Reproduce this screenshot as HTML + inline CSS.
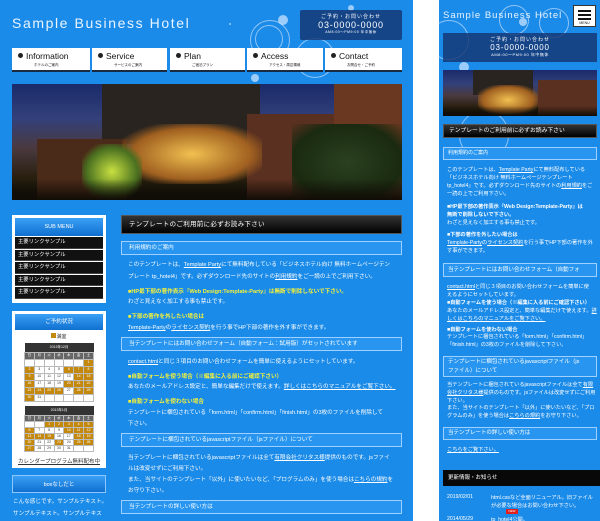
<!DOCTYPE html>
<html><head><meta charset="utf-8">
<style>
*{margin:0;padding:0;box-sizing:border-box}
body{width:600px;height:521px;overflow:hidden;background:#fff;font-family:"Liberation Sans","Noto Sans CJK JP",sans-serif;position:relative;color:#fff}
.a{position:absolute}
#d{left:0;top:0;width:413px;height:521px;background:#1b8be9;overflow:hidden}
#m{left:439px;top:0;width:161px;height:521px;background:#1b8be9;overflow:hidden}
.circ{position:absolute;border-radius:50%;background:rgba(200,225,255,.75)}
.ring{position:absolute;border-radius:50%;border:1px solid rgba(220,235,255,.6)}
.nav{position:absolute;top:48px;height:24px;background:#fff;border-bottom:2px solid #1a2a40;color:#111}
.nav b{position:absolute;left:6px;top:3px;font-size:8.5px;font-weight:normal}
.nav b:before{content:"";display:inline-block;width:5px;height:5px;border-radius:50%;background:#222;margin-right:3px;vertical-align:1px}
.nav i{position:absolute;left:22px;top:15px;font-size:3.5px;font-style:normal}
.photo{background:linear-gradient(180deg,#1a2a6a 0%,#33407a 30%,#4a3a40 55%,#2a2010 80%,#101008 100%)}
.t{position:absolute;font-size:5.6px;white-space:nowrap;color:#fff}
.y{color:#f4f23a;font-weight:bold}
u{text-decoration:underline}
.box{position:absolute;border:1px solid #9fd0ff;background:#2896f0;font-size:5.6px;padding-left:7px;line-height:12px}
.hd{position:absolute;background:linear-gradient(#333,#000);border:1px solid #555;color:#fff}
.side{position:absolute;background:#fff}
.sh{position:absolute;background:linear-gradient(#3aa0f5,#0f6fd0);color:#fff;font-size:5.5px;text-align:center}
.li{position:absolute;left:3px;width:88px;height:11.5px;background:#111;border-bottom:1px solid #444;color:#fff;font-size:5.3px;line-height:11px;padding-left:3px}
table{border-collapse:collapse;position:absolute;table-layout:fixed}
td{height:7px;border:1px solid #bbb;font-size:3.5px;text-align:center;color:#333;background:#fff;padding:0;line-height:5px}
#c2 td{height:6px}
td.o{background:#c4880c;color:#fff}
td.w{background:#666;color:#fff}
th{background:#333;color:#fff;font-size:3.5px;height:9px;font-weight:normal;line-height:5px}
.mt{position:absolute;font-size:5.2px;white-space:nowrap;color:#fff;left:8px}
</style></head><body>

<div id="d" class="a">
  <div class="circ" style="left:278px;top:15px;width:10px;height:10px"></div>
  <div class="circ" style="left:348px;top:5px;width:6px;height:6px"></div>
  <div class="ring" style="left:250px;top:20px;width:40px;height:40px"></div>
  <div class="ring" style="left:255px;top:25px;width:28px;height:28px"></div>
  <div class="ring" style="left:295px;top:38px;width:40px;height:40px"></div>
  <div class="circ" style="left:251px;top:74px;width:8px;height:8px"></div>
  <div class="circ" style="left:229px;top:23px;width:2px;height:2px"></div>
  <div class="a" style="left:12px;top:15px;font-size:14px;letter-spacing:1.6px;font-weight:300;color:#e8f4ff">Sample Business Hotel</div>
  <div class="a" style="left:300px;top:10px;width:102px;height:30px;background:rgba(20,50,110,.8);border-radius:2px;text-align:center">
    <div style="font-size:5px;margin-top:3px;letter-spacing:1px">ご予約・お問い合わせ</div>
    <div style="font-size:9px;letter-spacing:.8px;line-height:10px">03-0000-0000</div>
    <div style="font-size:3.5px;letter-spacing:.5px">AM8:00〜PM9:00 年中無休</div>
  </div>
  <div class="nav" style="left:12px;width:78px"><b>Information</b><i>ホテルのご案内</i></div>
  <div class="nav" style="left:92px;width:75px"><b>Service</b><i>サービスのご案内</i></div>
  <div class="nav" style="left:170px;width:75px"><b>Plan</b><i>ご宿泊プラン</i></div>
  <div class="nav" style="left:247px;width:76px"><b>Access</b><i>アクセス・周辺環境</i></div>
  <div class="nav" style="left:325px;width:77px"><b>Contact</b><i>お問合せ・ご予約</i></div>

  <div class="a photo" style="left:12px;top:84px;width:390px;height:116px;overflow:hidden">
    <div class="a" style="left:90px;top:0;width:158px;height:60px;background:#2a2420"></div>
    <div class="a" style="left:235px;top:30px;width:155px;height:86px;background:#5a3020"></div>
    <div class="a" style="left:322px;top:0;width:68px;height:60px;background:#6a3820"></div>
    <div class="a" style="left:25px;top:55px;width:90px;height:60px;background:#4a2a18"></div>
    <div class="a" style="left:110px;top:40px;width:140px;height:60px;background:radial-gradient(ellipse,#f0c050,#a06020 60%,transparent 80%)"></div>
    <div class="a" style="left:70px;top:60px;width:60px;height:55px;background:radial-gradient(ellipse,#c8e040,#4a7020 60%,transparent 80%)"></div>
    <div class="a" style="left:280px;top:40px;width:110px;height:76px;background:radial-gradient(ellipse,#2a4020,#1a2a10 70%,transparent)"></div>
    <div class="a" style="left:0;top:95px;width:390px;height:21px;background:linear-gradient(transparent,#100c06)"></div>
  </div>

  <div class="side" style="left:12px;top:215px;width:94px;height:88px">
    <div class="sh" style="left:3px;top:3px;width:88px;height:18px;line-height:18px">SUB MENU</div>
    <div class="li" style="top:22px">主要リンクサンプル</div>
    <div class="li" style="top:34.5px">主要リンクサンプル</div>
    <div class="li" style="top:47px">主要リンクサンプル</div>
    <div class="li" style="top:59.5px">主要リンクサンプル</div>
    <div class="li" style="top:72px">主要リンクサンプル</div>
  </div>
  <div class="side" style="left:12px;top:311px;width:94px;height:157px;color:#333">
    <div class="sh" style="left:3px;top:3px;width:88px;height:16px;line-height:16px">ご予約状況</div>
    <div class="a" style="left:0;width:94px;top:22px;text-align:center;font-size:5px"><span style="display:inline-block;width:5px;height:5px;background:#c4880c"></span>満室</div>
    <table style="left:12px;top:32px;width:70px">
      <tr><th colspan="7">2013年12月</th></tr>
      <tr><td class="w">日</td><td class="w">月</td><td class="w">火</td><td class="w">水</td><td class="w">木</td><td class="w">金</td><td class="w">土</td></tr>
      <tr><td></td><td></td><td></td><td></td><td></td><td></td><td class="o">1</td></tr>
      <tr><td class="o">2</td><td>3</td><td>4</td><td>5</td><td class="o">6</td><td class="o">7</td><td class="o">8</td></tr>
      <tr><td class="o">9</td><td>10</td><td>11</td><td>12</td><td>13</td><td class="o">14</td><td class="o">15</td></tr>
      <tr><td class="o">16</td><td>17</td><td>18</td><td>19</td><td class="o">20</td><td class="o">21</td><td class="o">22</td></tr>
      <tr><td class="o">23</td><td class="o">24</td><td class="o">25</td><td class="o">26</td><td>27</td><td class="o">28</td><td class="o">29</td></tr>
      <tr><td class="o">30</td><td>31</td><td></td><td></td><td></td><td></td><td></td></tr>
    </table>
    <table id="c2" style="left:12px;top:95px;width:70px">
      <tr><th colspan="7">2013年1月</th></tr>
      <tr><td class="w">日</td><td class="w">月</td><td class="w">火</td><td class="w">水</td><td class="w">木</td><td class="w">金</td><td class="w">土</td></tr>
      <tr><td></td><td></td><td class="o">1</td><td class="o">2</td><td class="o">3</td><td class="o">4</td><td class="o">5</td></tr>
      <tr><td class="o">6</td><td>7</td><td>8</td><td>9</td><td class="o">10</td><td class="o">11</td><td class="o">12</td></tr>
      <tr><td class="o">13</td><td class="o">14</td><td class="o">15</td><td>16</td><td>17</td><td class="o">18</td><td class="o">19</td></tr>
      <tr><td class="o">20</td><td>21</td><td>22</td><td class="o">23</td><td>24</td><td class="o">25</td><td class="o">26</td></tr>
      <tr><td class="o">27</td><td>28</td><td>29</td><td>30</td><td>31</td><td></td><td></td></tr>
    </table>
    <div class="a" style="left:0;width:94px;top:146px;text-align:center;font-size:5.5px;text-decoration:underline">カレンダープログラム無料配布中</div>
  </div>
  <div class="sh" style="left:12px;top:475px;width:94px;height:18px;line-height:18px;border:1px solid #8cc8ff">boxなしだと</div>
  <div class="t" style="left:13px;top:497px">こんな感じです。サンプルテキスト。</div>
  <div class="t" style="left:13px;top:509px">サンプルテキスト。サンプルテキス</div>
  <div class="t" style="left:13px;top:519px">ト。</div>

  <div class="hd" style="left:121px;top:215px;width:281px;height:19px;font-size:6.5px;line-height:18px;padding-left:7px;letter-spacing:.3px">テンプレートのご利用前に必ずお読み下さい</div>
  <div class="box" style="left:121px;top:241px;width:281px;height:14px">利用規約のご案内</div>
  <div class="t" style="left:128px;top:260px">このテンプレートは、<u>Template Party</u>にて無料配布している「ビジネスホテル向け 無料ホームページテン</div>
  <div class="t" style="left:128px;top:272px">プレート tp_hotel4」です。必ずダウンロード先のサイトの<u>利用規約</u>をご一読の上でご利用下さい。</div>
  <div class="t y" style="left:128px;top:287px">■HP最下部の著作表示『Web Design:Template-Party』は無断で削除しないで下さい。</div>
  <div class="t" style="left:128px;top:297px">わざと見えなく加工する事も禁止です。</div>
  <div class="t y" style="left:128px;top:312px">■下部の著作を外したい場合は</div>
  <div class="t" style="left:128px;top:323px"><u>Template-Party</u>の<u>ライセンス契約</u>を行う事でHP下部の著作を外す事ができます。</div>
  <div class="box" style="left:121px;top:337px;width:281px;height:14px">当テンプレートにはお問い合わせフォーム（自動フォーム：試用版）がセットされています</div>
  <div class="t" style="left:128px;top:357px"><u>contact.html</u>と同じ３項目のお問い合わせフォームを簡単に使えるようにセットしています。</div>
  <div class="t y" style="left:128px;top:372px">■自動フォームを使う場合（※編集に入る前にご確認下さい）</div>
  <div class="t" style="left:128px;top:382px">あなたのメールアドレス設定と、簡単な編集だけで使えます。<u>詳しくはこちらのマニュアルをご覧下さい。</u></div>
  <div class="t y" style="left:128px;top:397px">■自動フォームを使わない場合</div>
  <div class="t" style="left:128px;top:408px">テンプレートに梱包されている「form.html」「confirm.html」「finish.html」の3枚のファイルを削除して</div>
  <div class="t" style="left:128px;top:419px">下さい。</div>
  <div class="box" style="left:121px;top:433px;width:281px;height:14px">テンプレートに梱包されているjavascriptファイル（jsファイル）について</div>
  <div class="t" style="left:128px;top:453px">当テンプレートに梱包されているjavascriptファイルは全て<u>有限会社クリタス様</u>提供のものです。jsファイ</div>
  <div class="t" style="left:128px;top:464px">ルは改変せずにご利用下さい。</div>
  <div class="t" style="left:128px;top:475px">また、当サイトのテンプレート「以外」に使いたいなど、「プログラムのみ」を使う場合は<u>こちらの規約</u>を</div>
  <div class="t" style="left:128px;top:486px">お守り下さい。</div>
  <div class="box" style="left:121px;top:500px;width:281px;height:14px">当テンプレートの詳しい使い方は</div>
</div>

<div id="m" class="a">
  <div class="ring" style="left:-10px;top:20px;width:40px;height:40px"></div>
  <div class="ring" style="left:60px;top:5px;width:30px;height:30px"></div>
  <div class="ring" style="left:100px;top:8px;width:30px;height:30px"></div>
  <div class="circ" style="left:20px;top:62px;width:10px;height:10px"></div>
  <div class="circ" style="left:80px;top:18px;width:8px;height:8px"></div>
  <div class="ring" style="left:20px;top:110px;width:50px;height:50px"></div>
  <div class="a" style="left:4px;top:10px;font-size:9.5px;letter-spacing:1px;color:#e8f4ff">Sample Business Hotel</div>
  <div class="a" style="left:134px;top:5px;width:23px;height:22px;background:#fff;border:1px solid #333">
    <div class="a" style="left:4px;top:4px;width:13px;height:2px;background:#111"></div>
    <div class="a" style="left:4px;top:8px;width:13px;height:2px;background:#111"></div>
    <div class="a" style="left:4px;top:12px;width:13px;height:2px;background:#111"></div>
    <div class="a" style="left:0;top:15px;width:21px;text-align:center;font-size:3.5px;color:#111">MENU</div>
  </div>
  <div class="a" style="left:4px;top:33px;width:154px;height:29px;background:rgba(20,50,110,.8);text-align:center">
    <div style="font-size:5px;margin-top:3px;letter-spacing:1px">ご予約・お問い合わせ</div>
    <div style="font-size:8px;letter-spacing:.8px;line-height:9px">03-0000-0000</div>
    <div style="font-size:4px;letter-spacing:.5px">AM8:00〜PM9:00 年中無休</div>
  </div>
  <div class="a photo" style="left:4px;top:70px;width:154px;height:46px;overflow:hidden">
    <div class="a" style="left:30px;top:0;width:60px;height:25px;background:#2a2420"></div>
    <div class="a" style="left:95px;top:10px;width:59px;height:36px;background:#5a3020"></div>
    <div class="a" style="left:35px;top:15px;width:60px;height:30px;background:radial-gradient(ellipse,#f0c050,#a06020 60%,transparent 80%)"></div>
    <div class="a" style="left:0;top:36px;width:154px;height:10px;background:linear-gradient(transparent,#100c06)"></div>
  </div>
  <div class="hd" style="left:4px;top:124px;width:154px;height:14px;font-size:5.8px;line-height:13px;padding-left:5px">テンプレートのご利用前に必ずお読み下さい</div>
  <div class="box" style="left:4px;top:147px;width:154px;height:13px;line-height:11px;padding-left:4px;font-size:5px">利用規約のご案内</div>
  <div class="mt" style="top:166px">このテンプレートは、<u>Template Party</u>にて無料配布している</div>
  <div class="mt" style="top:174px">「ビジネスホテル向け 無料ホームページテンプレート</div>
  <div class="mt" style="top:182px">tp_hotel4」です。必ずダウンロード先のサイトの<u>利用規約</u>をご</div>
  <div class="mt" style="top:190px">一読の上でご利用下さい。</div>
  <div class="mt y" style="top:203px">■HP最下部の著作表示『Web Design:Template-Party』は</div>
  <div class="mt y" style="top:211px">無断で削除しないで下さい。</div>
  <div class="mt" style="top:219px">わざと見えなく加工する事も禁止です。</div>
  <div class="mt y" style="top:231px">■下部の著作を外したい場合は</div>
  <div class="mt" style="top:239px"><u>Template-Party</u>の<u>ライセンス契約</u>を行う事でHP下部の著作を外</div>
  <div class="mt" style="top:247px">す事ができます。</div>
  <div class="box" style="left:4px;top:263px;width:154px;height:14px;line-height:12px;padding-left:4px;font-size:5.5px;overflow:hidden;white-space:nowrap">当テンプレートにはお問い合わせフォーム（自動フォ</div>
  <div class="mt" style="top:283px"><u>contact.html</u>と同じ３項目のお問い合わせフォームを簡単に使</div>
  <div class="mt" style="top:291px">えるようにセットしています。</div>
  <div class="mt y" style="top:299px">■自動フォームを使う場合（※編集に入る前にご確認下さい）</div>
  <div class="mt" style="top:307px">あなたのメールアドレス設定と、簡単な編集だけで使えます。<u>詳</u></div>
  <div class="mt" style="top:315px"><u>しくはこちらのマニュアルをご覧下さい。</u></div>
  <div class="mt y" style="top:326px">■自動フォームを使わない場合</div>
  <div class="mt" style="top:333px">テンプレートに梱包されている「form.html」「confirm.html」</div>
  <div class="mt" style="top:341px">「finish.html」の3枚のファイルを削除して下さい。</div>
  <div class="box" style="left:4px;top:356px;width:154px;height:21px;line-height:9px;padding:1px 4px;font-size:5.5px">テンプレートに梱包されているjavascriptファイル（js<br>ファイル）について</div>
  <div class="mt" style="top:381px">当テンプレートに梱包されているjavascriptファイルは全て<u>有限</u></div>
  <div class="mt" style="top:389px"><u>会社クリタス様</u>提供のものです。jsファイルは改変せずにご利用</div>
  <div class="mt" style="top:397px">下さい。</div>
  <div class="mt" style="top:404px">また、当サイトのテンプレート「以外」に使いたいなど、「プロ</div>
  <div class="mt" style="top:412px">グラムのみ」を使う場合は<u>こちらの規約</u>をお守り下さい。</div>
  <div class="box" style="left:4px;top:427px;width:154px;height:13px;line-height:11px;padding-left:4px;font-size:5.5px">当テンプレートの詳しい使い方は</div>
  <div class="mt" style="top:446px"><u>こちらをご覧下さい。</u></div>
  <div class="a" style="left:4px;top:470px;width:157px;height:16px;background:#080808;font-size:5.5px;line-height:16px;padding-left:5px">更新情報・お知らせ</div>
  <div class="mt" style="top:494px">2019/02/01</div>
  <div class="mt" style="left:52px;top:494px">html.cssなど全面リニューアル。旧ファイル</div>
  <div class="mt" style="left:52px;top:502px">が必要な場合はお問い合わせ下さい。</div>
  <div class="a" style="left:67px;top:509px;width:12px;height:5px;background:#e02020;font-size:3px;text-align:center;line-height:5px">NEW</div>
  <div class="mt" style="top:516px">2014/05/29</div>
  <div class="mt" style="left:52px;top:516px">tp_hotel4公開。</div>
</div>
</body></html>
